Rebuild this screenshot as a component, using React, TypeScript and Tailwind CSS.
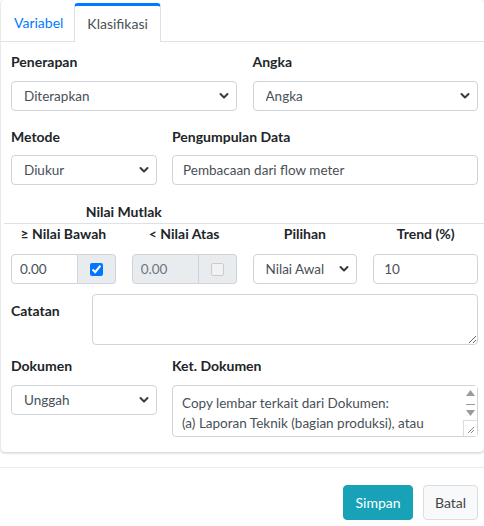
import React from 'react'

const font = { fontFamily: 'Lato, "Noto Sans", sans-serif' }

function Chevron() {
  return (
    <svg
      className="pointer-events-none absolute right-[8px] top-1/2 -translate-y-1/2"
      width="10"
      height="8"
      viewBox="0 0 10 8"
    >
      <path d="M1.5 2 L5 5.5 L8.5 2" fill="none" stroke="#343a40" strokeWidth="2" strokeLinecap="round" strokeLinejoin="round" />
    </svg>
  )
}

function Select({ value, options }: { value: string; options: string[] }) {
  return (
    <div className="relative">
      <select
        defaultValue={value}
        className="h-[30px] w-full appearance-none rounded-[4px] border border-[#ced4da] bg-white pl-[12px] pr-6 text-[13.5px] text-[#495057] outline-none"
      >
        {options.map((o) => (
          <option key={o}>{o}</option>
        ))}
      </select>
      <Chevron />
    </div>
  )
}

function Label({ children, className = '' }: { children: React.ReactNode; className?: string }) {
  return <div className={'h-5 text-[14px] font-bold leading-5 text-[#212529] ' + className}>{children}</div>
}

export default function App() {
  return (
    <div className="w-[484px] bg-white" style={font}>
      <div className="ml-[1px] rounded-[4px] bg-white shadow-[0_0_1px_rgba(0,0,0,0.125),0_1px_3px_rgba(0,0,0,0.2)]">
        {/* tabs */}
        <div className="flex border-b border-[#dee2e6] px-[2px] pt-[3px]">
          <div className="flex h-[38px] items-center px-[11px] text-[14px] text-[#007bff]">Variabel</div>
          <div className="-mb-px flex h-[39px] items-center rounded-t-[4px] border-x border-t-[3px] border-x-[#dee2e6] border-t-[#007bff] bg-white px-[12px] pb-[2px] text-[14px] text-[#495057]">
            Klasifikasi
          </div>
        </div>

        <div className="pb-[15px] pl-[10px] pr-[6px] pt-[10px]">
          {/* row 1 */}
          <div className="grid grid-cols-2 gap-4">
            <div>
              <Label className="mb-[9px]">Penerapan</Label>
              <Select value="Diterapkan" options={['Diterapkan', 'Tidak Diterapkan']} />
            </div>
            <div>
              <Label className="mb-[9px]">Angka</Label>
              <Select value="Angka" options={['Angka', 'Teks']} />
            </div>
          </div>

          {/* row 2 */}
          <div className="mt-4 grid grid-cols-[146px_1fr] gap-[15px]">
            <div>
              <Label className="mb-2">Metode</Label>
              <Select value="Diukur" options={['Diukur', 'Dihitung']} />
            </div>
            <div>
              <Label className="mb-2">Pengumpulan Data</Label>
              <input
                defaultValue="Pembacaan dari flow meter"
                className="h-[30px] w-full rounded-[4px] border border-[#ced4da] px-[10px] text-[13.5px] text-[#495057] outline-none"
              />
            </div>
          </div>

          {/* nilai mutlak */}
          <div className="mt-[17px] grid grid-cols-2 gap-4">
            <Label className="text-center">Nilai Mutlak</Label>
          </div>
          <div className="-ml-[7px] -mr-[6px] mt-px border-t border-[#dee2e6]" />
          <div className="grid grid-cols-4 gap-4">
            <Label className="text-center">≥ Nilai Bawah</Label>
            <Label className="text-center">&lt; Nilai Atas</Label>
            <Label className="text-center">Pilihan</Label>
            <Label className="text-center">Trend (%)</Label>
          </div>
          <div className="mt-[10px] grid grid-cols-4 gap-4">
            <div className="flex h-[30px]">
              <input
                defaultValue="0.00"
                className="w-[67px] min-w-0 rounded-l-[4px] border border-[#ced4da] px-[8px] text-[13.5px] text-[#495057] outline-none"
              />
              <div className="flex flex-1 items-center justify-center rounded-r-[4px] border border-l-0 border-[#ced4da] bg-[#e9ecef]">
                <input type="checkbox" defaultChecked className="h-[13px] w-[13px]" />
              </div>
            </div>
            <div className="flex h-[30px]">
              <input
                defaultValue="0.00"
                disabled
                className="w-[67px] min-w-0 rounded-l-[4px] border border-[#ced4da] bg-[#e9ecef] px-[8px] text-[13.5px] text-[#6c757d] outline-none"
              />
              <div className="flex flex-1 items-center justify-center rounded-r-[4px] border border-l-0 border-[#ced4da] bg-[#e9ecef]">
                <input type="checkbox" disabled className="h-[13px] w-[13px]" />
              </div>
            </div>
            <Select value="Nilai Awal" options={['Nilai Awal', 'Nilai Akhir']} />
            <input
              defaultValue="10"
              className="h-[30px] w-full rounded-[4px] border border-[#ced4da] px-[10px] text-[13.5px] text-[#495057] outline-none"
            />
          </div>

          {/* catatan */}
          <div className="mt-[10px] grid grid-cols-[66px_1fr] gap-[15px]">
            <Label className="pt-[7px]">Catatan</Label>
            <textarea className="block h-[51px] w-full rounded-[4px] border border-[#ced4da] px-[10px] py-[6px] text-[13.5px] text-[#495057] outline-none" />
          </div>

          {/* dokumen */}
          <div className="mt-[11px] grid grid-cols-[146px_1fr] gap-[15px]">
            <div>
              <Label className="mb-[9px]">Dokumen</Label>
              <Select value="Unggah" options={['Unggah', 'Tautan']} />
            </div>
            <div>
              <Label className="mb-[9px]">Ket. Dokumen</Label>
              <div className="relative">
                <textarea
                  defaultValue={'Copy lembar terkait dari Dokumen:\n(a) Laporan Teknik (bagian produksi), atau'}
                  className="block h-[52px] w-full overflow-hidden rounded-[4px] border border-[#ced4da] pl-[9px] pr-[18px] pt-[7px] text-[13.5px] leading-5 text-[#495057] outline-none"
                />
                {/* scrollbar overlay */}
                <div className="pointer-events-none absolute right-px top-px flex h-[35px] w-[13px] flex-col items-center bg-white pt-[2px]">
                  <svg width="11" height="30" viewBox="0 0 11 30">
                    <path d="M1 8 L5.5 2 L10 8 Z" fill="#9a9a9a" />
                    <rect x="1" y="16" width="9" height="1" fill="#9a9a9a" />
                    <path d="M1 22 L5.5 28 L10 22 Z" fill="#9a9a9a" />
                  </svg>
                </div>
                <div className="pointer-events-none absolute bottom-px right-px h-[16px] w-[14px] border-l border-t border-[#dcdcdc] bg-white" />
                <svg className="pointer-events-none absolute bottom-[3px] right-[3px]" width="8" height="8" viewBox="0 0 8 8">
                  <path d="M7 1 L1 7 M7 4 L4 7" stroke="#8a8a8a" strokeWidth="1" />
                </svg>
              </div>
            </div>
          </div>
        </div>
      </div>

      {/* footer */}
      <div className="mt-[15px] flex justify-end gap-[10px] border-t border-[#e9ecef] pb-[7px] pr-[6px] pt-[17px]">
        <button className="h-[35px] w-[70px] rounded-[4px] border border-[#17a2b8] bg-[#17a2b8] text-[14px] text-white">
          Simpan
        </button>
        <button className="h-[35px] w-[55px] rounded-[4px] border border-[#ddd] bg-[#f8f9fa] text-[14px] text-[#444]">
          Batal
        </button>
      </div>
    </div>
  )
}
